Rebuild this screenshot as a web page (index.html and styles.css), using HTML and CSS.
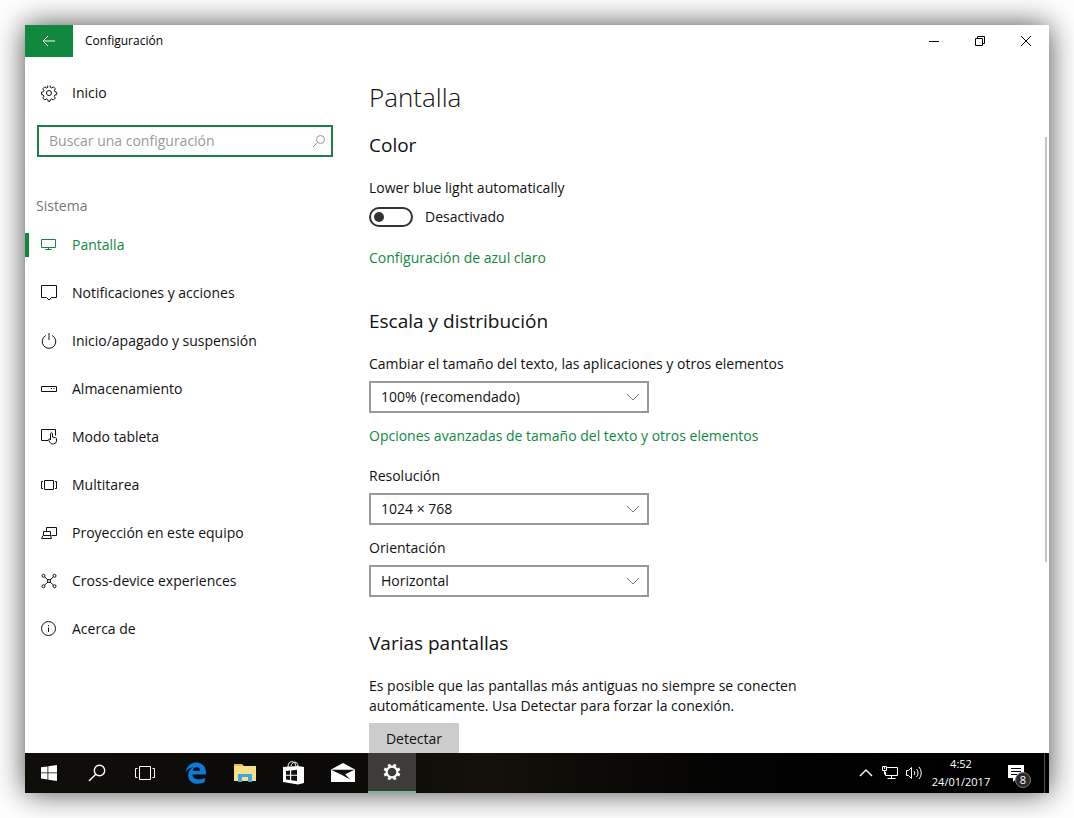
FILE: index.html
```html
<!DOCTYPE html>
<html lang="es">
<head>
    <meta charset="UTF-8">
    <meta name="viewport" content="width=device-width, initial-scale=1.0">
    <title>Configuración</title>
    <link rel="stylesheet" href="styles.css">
</head>
<body>
    <div class="desktop">
        <!-- Title bar -->
        <header class="titlebar">
            <button type="button" class="back-btn" aria-label="Atrás">
                <svg width="14" height="12" viewBox="0 0 14 12"><path d="M1 6h12M6 1L1 6l5 5" /></svg>
            </button>
            <span class="titlebar-text">Configuración</span>
            <div class="window-controls">
                <button type="button" aria-label="Minimizar">
                    <svg width="12" height="12" viewBox="0 0 12 12"><path d="M1 6.5h10" /></svg>
                </button>
                <button type="button" aria-label="Restaurar">
                    <svg width="12" height="12" viewBox="0 0 12 12"><path d="M1.5 3.5h7v7h-7zM3.5 3.5v-2h7v7h-2" /></svg>
                </button>
                <button type="button" aria-label="Cerrar">
                    <svg width="12" height="12" viewBox="0 0 12 12"><path d="M1 1l10 10M11 1L1 11" /></svg>
                </button>
            </div>
        </header>

        <div class="settings">
            <!-- Sidebar -->
            <aside class="sidebar">
                <a href="#" class="home-link">
                    <svg width="18" height="18" viewBox="0 0 18 18">
                        <path d="M7.6 1.5l.3 1.8-1.5.7-1.6-1.2-2 2 1.1 1.6-.6 1.4-1.8.4v2.4l1.8.4.6 1.4-1.1 1.6 2 2 1.6-1.1 1.4.6.4 1.8H10l.4-1.8 1.4-.6 1.6 1.1 2-2-1.1-1.6.6-1.4 1.8-.4V8.200l-1.8-.4-.6-1.400 1.100-1.600-2-2L11.800 4l-1.500-.7L10 1.500" />
                        <circle cx="9" cy="9" r="2.5" />
                    </svg>
                    Inicio
                </a>

                <form class="search" role="search">
                    <input type="text" class="search-input" placeholder="Buscar una configuración" aria-label="Buscar una configuración">
                    <svg class="search-icon" width="14" height="14" viewBox="0 0 14 14"><circle cx="8.5" cy="5.5" r="4" /><path d="M5.6 8.4L1 13" /></svg>
                </form>

                <h2 class="group-title">Sistema</h2>

                <nav class="menu">
                    <a href="#" class="menu-item active">
                        <svg width="18" height="18" viewBox="0 0 18 18"><path d="M1.5 3.5h14v8h-14zM8.5 11.5v2M5.5 13.500h6" /></svg>
                        Pantalla
                    </a>
                    <a href="#" class="menu-item">
                        <svg width="18" height="18" viewBox="0 0 18 18"><path d="M1.5 1.5h15v12h-5L9 16l-2.500-2.500h-5z" /></svg>
                        Notificaciones y acciones
                    </a>
                    <a href="#" class="menu-item">
                        <svg width="18" height="18" viewBox="0 0 18 18"><path d="M9 1v7M5.8 3.5a6.800 6.800 0 1 0 6.400 0" /></svg>
                        Inicio/apagado y suspensión
                    </a>
                    <a href="#" class="menu-item">
                        <svg width="18" height="18" viewBox="0 0 18 18"><path d="M1.5 6.5h15v5h-15zM11 8.5h1M13.5 8.5h1" /></svg>
                        Almacenamiento
                    </a>
                    <a href="#" class="menu-item">
                        <svg width="18" height="18" viewBox="0 0 18 18">
                            <path d="M8 12.5H1.5v-11h14v6" />
                            <path d="M10.5 12V5.800a1 1 0 0 1 2 0V9l3 .7a1.200 1.200 0 0 1 1 1.200V13a3.200 3.200 0 0 1-3.200 3h-.8c-1.500 0-2.200-.8-2.800-2L8.300 11.600c.6-1 1.600-.6 2.200.4" />
                        </svg>
                        Modo tableta
                    </a>
                    <a href="#" class="menu-item">
                        <svg width="18" height="18" viewBox="0 0 18 18"><path d="M4.5 4.5h9v9h-9zM3 5.5H1.5v7H3M15 5.5h1.5v7H15" /></svg>
                        Multitarea
                    </a>
                    <a href="#" class="menu-item">
                        <svg width="18" height="18" viewBox="0 0 18 18"><path d="M6.500 7V3.500h10v8h-5M3.500 7.500h7v4h-7zM3 11.500l-1.500 3h10l-1-3" /></svg>
                        Proyección en este equipo
                    </a>
                    <a href="#" class="menu-item">
                        <svg width="18" height="18" viewBox="0 0 18 18">
                            <circle cx="3.5" cy="3.8" r="1.5" /><circle cx="14.5" cy="3.8" r="1.5" />
                            <circle cx="3.5" cy="14.2" r="1.5" /><circle cx="14.5" cy="14.2" r="1.5" />
                            <circle cx="9" cy="9" r="1.5" />
                            <path d="M4.600 4.900L8 8M13.400 4.900L10 8M4.600 13.100L8 10M13.400 13.100L10 10" />
                        </svg>
                        Cross-device experiences
                    </a>
                    <a href="#" class="menu-item">
                        <svg width="18" height="18" viewBox="0 0 18 18"><circle cx="8.5" cy="8.5" r="7" /><path d="M8.5 7.5V12M8.5 5v1.200" /></svg>
                        Acerca de
                    </a>
                </nav>
            </aside>

            <!-- Display settings -->
            <main class="content">
                <h1>Pantalla</h1>

                <section>
                    <h2>Color</h2>
                    <label for="blue-light">Lower blue light automatically</label>
                    <div class="toggle-row">
                        <input type="checkbox" id="blue-light" class="toggle">
                        <span>Desactivado</span>
                    </div>
                    <a href="#" class="link">Configuración de azul claro</a>
                </section>

                <section>
                    <h2>Escala y distribución</h2>
                    <label for="scale">Cambiar el tamaño del texto, las aplicaciones y otros elementos</label>
                    <div class="select-box">
                        <select id="scale">
                            <option>100% (recomendado)</option>
                        </select>
                        <svg width="14" height="8" viewBox="0 0 14 8"><path d="M1 1l6 6 6-6" /></svg>
                    </div>
                    <a href="#" class="link">Opciones avanzadas de tamaño del texto y otros elementos</a>

                    <label for="resolution">Resolución</label>
                    <div class="select-box">
                        <select id="resolution">
                            <option>1024 × 768</option>
                        </select>
                        <svg width="14" height="8" viewBox="0 0 14 8"><path d="M1 1l6 6 6-6" /></svg>
                    </div>

                    <label for="orientation">Orientación</label>
                    <div class="select-box">
                        <select id="orientation">
                            <option>Horizontal</option>
                        </select>
                        <svg width="14" height="8" viewBox="0 0 14 8"><path d="M1 1l6 6 6-6" /></svg>
                    </div>
                </section>

                <section>
                    <h2>Varias pantallas</h2>
                    <p>Es posible que las pantallas más antiguas no siempre se conecten automáticamente. Usa Detectar para forzar la conexión.</p>
                    <button type="button" class="detect-btn">Detectar</button>
                </section>
            </main>
            <div class="scroll-thumb"></div>
        </div>

        <!-- Taskbar -->
        <footer class="taskbar">
            <div class="system-buttons">
                <button type="button" aria-label="Inicio">
                    <svg width="16" height="16" viewBox="0 0 16 16"><path fill="#fff" d="M0 2.300l6.500-.9v6.100H0zM7.300 1.300L16 0v7.500H7.300zM0 8.300h6.500v6.200L0 13.600zM7.300 8.300H16V16l-8.700-1.300z" /></svg>
                </button>
                <button type="button" aria-label="Buscar">
                    <svg class="line-icon" width="18" height="18" viewBox="0 0 18 18"><circle cx="11.5" cy="6.5" r="5.2" /><path d="M7.8 10.2L1 17" /></svg>
                </button>
                <button type="button" aria-label="Vista de tareas">
                    <svg class="line-icon thin" width="22" height="16" viewBox="0 0 22 16"><path d="M5.5 1.5h11v13h-11zM3.5 3.5h-2v9h2M18.5 3.5h2v9h-2" /></svg>
                </button>
            </div>
            <div class="pinned-apps">
                <button type="button" aria-label="Microsoft Edge">
                    <svg width="22" height="22" viewBox="0 0 22 22"><path fill="#0a7ad8" d="M.8 10.200C1.600 4.200 5.600.4 11.300.4c6 0 9.700 4.200 9.700 10v2.200H7.600c.2 3.300 2.700 4.800 6 4.800 2.300 0 4.400-.6 6.200-1.700v4.400c-2 1.200-4.400 1.700-7.100 1.700-5.700 0-9.500-3.100-9.500-8.600 0-3.700 1.900-6.500 5.300-8.200C4.900 5.600 2.500 7.400.8 10.200zM7.700 8.800h7.500c0-2.300-1.200-3.800-3.500-3.800-2.200 0-3.500 1.500-4 3.800z" /></svg>
                </button>
                <button type="button" aria-label="Explorador de archivos">
                    <svg width="22" height="18" viewBox="0 0 22 18">
                        <path fill="#e5b94e" d="M0 0h8l2 2h11v3H0z" />
                        <path fill="#fbe08b" d="M0 2h22v15H0z" />
                        <path fill="#3fa9de" d="M4 10h14v8h-4v-5H8v5H4z" />
                    </svg>
                </button>
                <button type="button" aria-label="Tienda">
                    <svg width="22" height="24" viewBox="0 0 22 24">
                        <path fill="none" stroke="#fff" d="M5 6c0-7 7-7 8-1M8 5c1-5 7-5 7 0" />
                        <path fill="#fff" d="M0 6l15-1 6 1v16l-6 1.500L0 21z" />
                        <path fill="#111" d="M3 10l4-.5v4.200H3zM8.200 9.400L14 8.700v5H8.200zM3 14.800h4V19l-4-.4zM8.200 14.800H14V20l-5.800-.8z" />
                    </svg>
                </button>
                <button type="button" aria-label="Correo">
                    <svg width="24" height="20" viewBox="0 0 24 20">
                        <path fill="#fff" d="M0 6.500L12 0l12 6.500V19H0z" />
                        <path fill="#111" d="M0 6.700h23.500l-9.300 4.500 5 5.300L11 12z" />
                    </svg>
                </button>
            </div>
            <button type="button" class="running-app" aria-label="Configuración">
                <svg width="18" height="18" viewBox="0 0 18 18">
                    <circle cx="9" cy="9" r="5.400" fill="none" stroke="#fff" stroke-width="2.200" />
                    <path fill="none" stroke="#fff" stroke-width="3" d="M11.200 3.700l1-2.500M14.300 6.800l2.500-1M14.300 11.200l2.500 1M11.200 14.300l1 2.500M6.800 14.300l-1 2.500M3.700 11.200l-2.500 1M3.700 6.800l-2.500-1M6.800 3.700l-1-2.500" />
                </svg>
            </button>

            <div class="tray">
                <button type="button" aria-label="Mostrar iconos ocultos">
                    <svg class="line-icon" width="14" height="8" viewBox="0 0 14 8"><path d="M1 7l6-6 6 6" /></svg>
                </button>
                <button type="button" aria-label="Red">
                    <svg class="line-icon thin" width="18" height="16" viewBox="0 0 18 16"><path d="M6 2.500h10.500v8H4.500V7M10.500 10.500v3M6.500 13.500h8M1.500 1.500h4v4h-4zM3.500 1.500V4M3.500 5.500v4" /></svg>
                </button>
                <button type="button" aria-label="Volumen">
                    <svg class="line-icon thin" width="18" height="14" viewBox="0 0 18 14"><path d="M1.500 4.500h2l3-3v11l-3-3h-2zM9 5a3 3 0 0 1 0 4M11.500 3a6 6 0 0 1 0 8M14 1a9 9 0 0 1 0 12" /></svg>
                </button>
                <button type="button" class="clock">
                    <time>4:52</time>
                    <time>24/01/2017</time>
                </button>
                <button type="button" class="notifications" aria-label="Centro de actividades">
                    <svg width="16" height="17" viewBox="0 0 16 17">
                        <path fill="#fff" d="M0 0h16v13h-7l-4 4v-4H0z" />
                        <path stroke="#000" d="M3 3.500h10M3 6.500h10M3 9.500h6" />
                    </svg>
                    <span class="badge">8</span>
                </button>
                <button type="button" class="show-desktop" aria-label="Mostrar escritorio"></button>
            </div>
        </footer>
    </div>
</body>
</html>
```
FILE: styles.css
```css
* {
    box-sizing: border-box;
}

body {
    margin: 0;
    padding: 25px;
    height: 100vh;
    background: #fefefe;
    color: #111;
    font-family: "Open Sans", "Noto Sans", sans-serif;
    font-size: 14px;
    line-height: 20px;
}

h1, h2, p {
    margin: 0;
    font-weight: 400;
}

button, input, select {
    font: inherit;
    color: inherit;
    border: none;
    border-radius: 0;
    margin: 0;
    padding: 0;
}

button {
    display: flex;
    align-items: center;
    justify-content: center;
    background: none;
    cursor: pointer;
}

a {
    color: inherit;
    text-decoration: none;
}

.desktop {
    display: flex;
    flex-direction: column;
    height: 100%;
    background: #fff;
    box-shadow: 0 0 28px rgba(0, 0, 0, 0.7);
}

/* Title bar */
.titlebar {
    display: flex;
    align-items: center;
    height: 32px;
    flex: none;
}

.titlebar svg {
    fill: none;
    stroke: #000;
}

.back-btn {
    width: 48px;
    height: 32px;
    background: #10893e;
}

.titlebar .back-btn svg {
    stroke: #fff;
}

.titlebar-text {
    margin-left: 12px;
    font-size: 12px;
    color: #000;
}

.window-controls {
    display: flex;
    margin-left: auto;
}

.window-controls button {
    width: 46px;
    height: 32px;
}

/* Settings */
.settings {
    position: relative;
    display: flex;
    flex: 1;
    min-height: 0;
    overflow: hidden;
}

.sidebar {
    flex: none;
    width: 320px;
}

.sidebar svg {
    flex: none;
    fill: none;
    stroke: currentColor;
}

.home-link {
    display: flex;
    align-items: center;
    gap: 14px;
    height: 48px;
    margin-top: 12px;
    padding-left: 15px;
    line-height: 22px;
}

.search {
    position: relative;
    margin: 8px 12px 0;
}

.search-input {
    display: block;
    width: 100%;
    height: 32px;
    padding: 0 32px 2px 10px;
    border: 2px solid #1c8048;
    outline: none;
}

.search-input::placeholder {
    color: #9a9a9a;
}

.sidebar .search-icon {
    position: absolute;
    top: 9px;
    right: 7px;
    stroke: #999;
}

.group-title {
    margin: 39px 0 5px 11px;
    font-size: 14px;
    line-height: 20px;
    color: #767676;
}

.menu-item {
    display: flex;
    align-items: center;
    gap: 14px;
    height: 48px;
    padding-left: 15px;
    line-height: 22px;
}

.menu-item.active {
    padding-left: 11px;
    color: #10893e;
}

.menu-item.active::before {
    content: "";
    width: 4px;
    height: 24px;
    margin-left: -11px;
    margin-right: -3px;
    background: #10893e;
}

/* Content */
.content {
    flex: 1;
    min-width: 0;
    padding: 22px 24px 0;
}

.content h1 {
    margin-bottom: 16px;
    font-size: 26px;
    font-weight: 300;
    line-height: 36px;
}

.content h2 {
    margin-bottom: 19px;
    font-size: 19px;
    line-height: 28px;
}

.content section {
    margin-bottom: 32px;
}

.content section:first-of-type {
    margin-bottom: 39px;
}

.content label,
.link {
    display: block;
}

.link {
    color: #10893e;
}

.link:hover {
    color: #767676;
}

.toggle-row {
    display: flex;
    align-items: center;
    gap: 12px;
    margin: 9px 0 21px;
}

.toggle {
    appearance: none;
    display: flex;
    align-items: center;
    width: 44px;
    height: 20px;
    padding: 0 3px;
    border: 2px solid #333;
    border-radius: 10px;
}

.toggle::before {
    content: "";
    width: 10px;
    height: 10px;
    border-radius: 50%;
    background: #333;
}

.toggle:checked {
    justify-content: flex-end;
    border-color: #10893e;
    background: #10893e;
}

.toggle:checked::before {
    background: #fff;
}

.select-box {
    position: relative;
    max-width: 280px;
    margin: 7px 0 13px;
}

.select-box select {
    appearance: none;
    display: block;
    width: 100%;
    height: 32px;
    padding: 0 32px 0 10px;
    border: 2px solid #999;
    background: #fff;
}

.select-box svg {
    position: absolute;
    top: 12px;
    right: 9px;
    fill: none;
    stroke: #777;
    pointer-events: none;
}

.link + label {
    margin-top: 20px;
}

.content p {
    max-width: 450px;
}

.detect-btn {
    min-width: 90px;
    height: 32px;
    margin-top: 7px;
    background: #ccc;
}

.scroll-thumb {
    position: absolute;
    top: 80px;
    right: 2px;
    width: 2px;
    height: 61%;
    background: #c4c4c4;
}

/* Taskbar */
.taskbar {
    display: flex;
    flex: none;
    height: 40px;
    background: linear-gradient(90deg, #100e0b 0%, #0b0a08 30%, #14110a 45%, #0d0b07 55%, #030303 70%, #000 100%);
    color: #fff;
}

.line-icon {
    fill: none;
    stroke: #fff;
    stroke-width: 1.4;
}

.line-icon.thin {
    stroke-width: 1;
}

.system-buttons,
.pinned-apps,
.tray {
    display: flex;
}

.system-buttons button {
    width: 48px;
}

.pinned-apps {
    padding: 0 1px 0 2px;
}

.pinned-apps button {
    width: 49px;
}

.running-app {
    width: 48px;
    background: #3e3c39;
    border-bottom: 2px solid #76b595;
}

.tray {
    margin-left: auto;
}

.tray button {
    width: 24px;
}

.tray .clock {
    flex-direction: column;
    width: 70px;
    font-size: 11px;
    line-height: 18px;
}

.tray .notifications {
    position: relative;
    width: 48px;
    padding-right: 8px;
}

.badge {
    position: absolute;
    top: 19px;
    left: 19px;
    width: 16px;
    height: 16px;
    border: 1px solid #777;
    border-radius: 50%;
    background: #2b2b2b;
    font-size: 11px;
    line-height: 14px;
    text-align: center;
}

.tray .show-desktop {
    width: 5px;
    border-left: 1px solid #555;
}
```
